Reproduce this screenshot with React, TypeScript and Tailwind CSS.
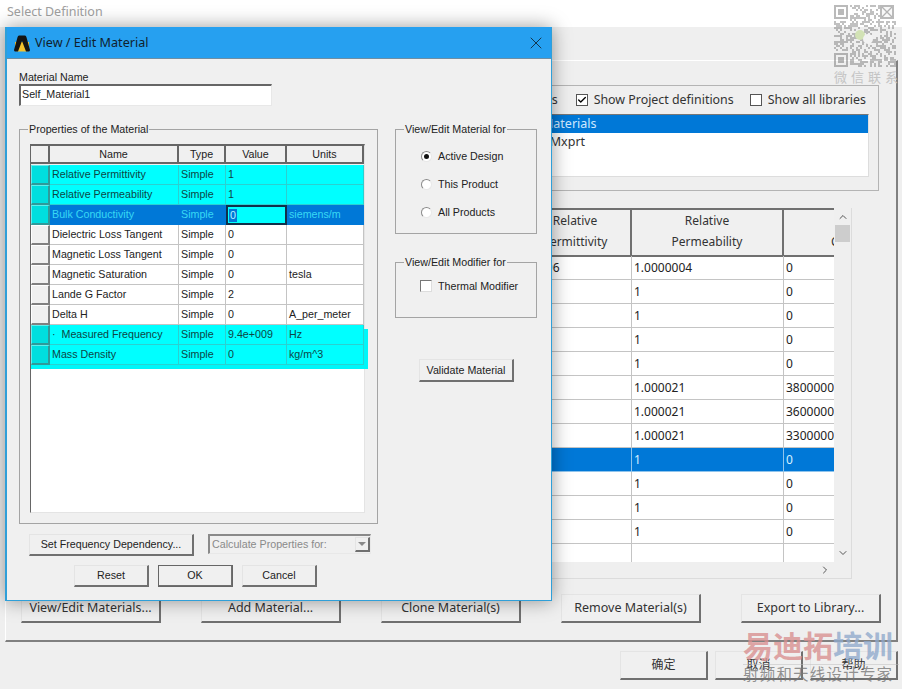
import { ReactNode } from 'react';
import { Check, ChevronDown, ChevronRight, ChevronUp, X } from 'lucide-react';

const backFont = 'font-["Noto_Sans","Noto_Sans_CJK_SC",sans-serif]';
const dialogFont = 'font-["Liberation_Sans","Noto_Sans_CJK_SC",sans-serif]';

const winEdge =
  'border border-t-[#e4e4e4] border-l-[#e4e4e4] border-r-2 border-b-2 border-r-[#707070] border-b-[#707070] bg-[#f0f0f0]';

const materialRows = [
  ['Relative Permittivity', 'Simple', '1', '', 'cyan'],
  ['Relative Permeability', 'Simple', '1', '', 'cyan'],
  ['Bulk Conductivity', 'Simple', '0', 'siemens/m', 'selected'],
  ['Dielectric Loss Tangent', 'Simple', '0', '', ''],
  ['Magnetic Loss Tangent', 'Simple', '0', '', ''],
  ['Magnetic Saturation', 'Simple', '0', 'tesla', ''],
  ['Lande G Factor', 'Simple', '2', '', ''],
  ['Delta H', 'Simple', '0', 'A_per_meter', ''],
];

const backRows = [
  ['0.9996', '1.0000004', '0'],
  ['', '1', '0'],
  ['', '1', '0'],
  ['', '1', '0'],
  ['', '1', '0'],
  ['', '1.000021', '38000000'],
  ['', '1.000021', '36000000'],
  ['', '1.000021', '33000000'],
  ['', '1', '0'],
  ['', '1', '0'],
  ['', '1', '0'],
  ['', '1', '0'],
  ['', '', ''],
];

function WinButton({ children, className }: { children: ReactNode; className: string }) {
  return (
    <button className={`flex shrink-0 items-center justify-center ${winEdge} ${className}`}>
      {children}
    </button>
  );
}

function Group({ title, className, children }: { title: string; className: string; children: ReactNode }) {
  return (
    <fieldset className={`border border-[#a4a4a4] ${className}`}>
      <legend className="ml-[8px] h-[13px] px-[1px] text-[10.7px] leading-[13px] text-[#222]">{title}</legend>
      {children}
    </fieldset>
  );
}

function Radio({ label, on }: { label: string; on?: boolean }) {
  return (
    <div className="flex h-[28px] items-center">
      <span className="flex h-[11px] w-[11px] items-center justify-center rounded-full border border-t-[#8a8a8a] border-l-[#8a8a8a] border-r-[#e8e8e8] border-b-[#e8e8e8] bg-white">
        {on && <span className="h-[5px] w-[5px] rounded-full bg-[#111]" />}
      </span>
      <span className="ml-[6px] text-[10.7px] text-[#222]">{label}</span>
    </div>
  );
}

function StubCell({ tint }: { tint: boolean }) {
  return (
    <div
      className={`h-full border border-r-2 border-b-2 ${
        tint
          ? 'border-t-[#60eeee] border-l-[#60eeee] border-r-[#2f9a9a] border-b-[#2f9a9a] bg-[#00dede]'
          : 'border-t-white border-l-white border-r-[#808080] border-b-[#808080] bg-[#f0f0f0]'
      }`}
    />
  );
}

function MaterialRow({ row }: { row: string[] }) {
  const [name, type, value, units, mode] = row;
  const cyan = mode === 'cyan';
  const selected = mode === 'selected';
  const rowBg = cyan ? 'bg-[#00ffff]' : selected ? 'bg-[#0078d7]' : 'bg-white';
  const line = selected ? 'border-[#0078d7]' : cyan ? 'border-[#2bd0d0]' : 'border-[#c4c4c4]';
  const text = cyan ? 'text-[#0f4545]' : selected ? 'text-[#38d8f4]' : 'text-[#222]';
  const cell = `flex items-center overflow-hidden whitespace-pre border-b border-r pl-[2px] ${line} ${text}`;
  return (
    <div className={`grid h-[20px] grid-cols-[19px_129px_47px_61px_77px] text-[10.7px] ${rowBg}`}>
      <StubCell tint={cyan || selected} />
      <div className={cell}>{name}</div>
      <div className={cell}>{type}</div>
      {selected ? (
        <div className="flex items-center border-2 border-[#10304a] bg-[#00ffff] pl-[1px]">
          <span className="bg-[#0078d7] px-[1px] leading-[13px] text-[#b8f4ff]">{value}</span>
        </div>
      ) : (
        <div className={cell}>{value}</div>
      )}
      <div className={cell}>{units}</div>
    </div>
  );
}

function MaterialGrid() {
  const headers = ['Name', 'Type', 'Value', 'Units'];
  return (
    <div className="ml-[10px] mt-[8px] h-[369px] w-[335px] border border-t-2 border-t-[#666] border-l-[#666] border-r-[#e4e4e4] border-b-[#e4e4e4] bg-white">
      <div className="grid h-[19px] grid-cols-[19px_129px_47px_61px_77px] bg-[#f0f0f0] pb-[1px] text-[10.7px] text-[#222]">
        <div className="border-b-2 border-r-2 border-[#666]" />
        {headers.map(h => (
          <div key={h} className="flex items-center justify-center border-b-2 border-r-2 border-[#666]">
            {h}
          </div>
        ))}
      </div>
      {materialRows.map(row => (
        <MaterialRow key={row[0]} row={row} />
      ))}
      {/* the two added rows carry a cyan mark that runs past the grid */}
      <div className="shadow-[4px_4px_0_0_#00f6f8,0_4px_0_0_#00f6f8]">
        <MaterialRow row={['·  Measured Frequency', 'Simple', '9.4e+009', 'Hz', 'cyan']} />
        <MaterialRow row={['Mass Density', 'Simple', '0', 'kg/m^3', 'cyan']} />
      </div>
    </div>
  );
}

function AppIcon() {
  return (
    <svg width="16" height="17" viewBox="0 0 16 17" className="shrink-0">
      <path d="M1 7 H15 V14 Q15 16.5 12.5 16.5 H3.5 Q1 16.5 1 14 Z" fill="#f2c22e" />
      <path d="M5 .5 H11 Q12 .5 12.4 2 L16 15 Q16 16.5 14.5 16.5 H12 L8 6 L4 16.5 H1.5 Q0 16.5 0 15 L3.6 2 Q4 .5 5 .5 Z" fill="#141414" />
    </svg>
  );
}

function EditDialog() {
  return (
    <div
      className={`absolute left-[5px] top-[27px] flex h-[574px] w-[547px] flex-col border-b border-l-2 border-r border-[#2f9fd8] bg-[#f0f0f0] shadow-[0_0_18px_rgba(0,0,0,0.4)] ${dialogFont}`}
    >
      <div className={`flex h-[32px] shrink-0 items-center border-b border-[#6f8ea3] bg-[#26a0f0] pl-[7px] pr-[5px] pt-[1px] ${backFont}`}>
        <AppIcon />
        <span className="ml-[5px] text-[12.6px] text-[#10202c]">View / Edit Material</span>
        <X size={20} strokeWidth={1} className="ml-auto text-[#10202c]" />
      </div>

      <div className="flex flex-1 flex-col pl-[12px] pt-[11px]">
        <div className="h-[14px] text-[10.7px] leading-[14px] text-[#222]">Material Name</div>
        <div className="h-[22px] w-[253px] border border-t-2 border-l-2 border-t-[#666] border-l-[#666] border-r-[#e8e8e8] border-b-[#e8e8e8] bg-white pl-[1px] text-[10.7px] leading-[16px] text-[#222]">
          Self_Material1
        </div>

        <div className="mt-[17px] flex">
          <Group title="Properties of the Material" className="h-[401px] w-[359px]">
            <MaterialGrid />
          </Group>

          <div className="ml-[17px] flex w-[142px] flex-col">
            <Group title="View/Edit Material for" className="h-[111px]">
              <div className="ml-[25px] mt-[6px]">
                <Radio label="Active Design" on />
                <Radio label="This Product" />
                <Radio label="All Products" />
              </div>
            </Group>
            <Group title="View/Edit Modifier for" className="mt-[22px] h-[62px]">
              <div className="ml-[24px] mt-[9px] flex items-center">
                <span className="h-[12px] w-[12px] border border-t-[#777] border-l-[#777] border-r-[#ddd] border-b-[#ddd] bg-white" />
                <span className="ml-[6px] text-[10.7px] text-[#222]">Thermal Modifier</span>
              </div>
            </Group>
            <WinButton className="ml-[24px] mt-[41px] h-[23px] w-[95px] text-[10.7px] text-[#222]">Validate Material</WinButton>
          </div>
        </div>

        <div className="ml-[10px] mt-[10px] flex items-start">
          <WinButton className="h-[22px] w-[165px] text-[10.7px] text-[#222]">Set Frequency Dependency...</WinButton>
          <div className="ml-[14px] flex h-[20px] w-[163px] items-center border border-t-2 border-l-2 border-t-[#8a8a8a] border-l-[#8a8a8a] border-r-[#e8e8e8] border-b-[#e8e8e8] pl-[2px] text-[10.7px] text-[#8a8a8a]">
            Calculate Properties for:
            <span className={`ml-auto flex h-[15px] w-[15px] items-center justify-center ${winEdge}`}>
              <span className="h-0 w-0 border-x-[4px] border-t-[4px] border-x-transparent border-t-[#8a8a8a]" />
            </span>
          </div>
        </div>

        <div className="ml-[55px] mt-[9px] flex gap-[9px] text-[10.7px] text-[#222]">
          <WinButton className="h-[22px] w-[75px]">Reset</WinButton>
          <WinButton className="h-[22px] w-[75px] outline outline-1 -outline-offset-1 outline-[#666]">OK</WinButton>
          <WinButton className="h-[22px] w-[75px]">Cancel</WinButton>
        </div>
      </div>
    </div>
  );
}

function BackTable() {
  return (
    <div className="ml-[10px] mt-[17px] flex h-[371px] w-[836px] flex-col border-b border-r border-[#dcdcdc]">
      <div className="flex h-[354px]">
        <div className="w-[818px] overflow-hidden bg-white text-[12px] text-[#222]">
          <div className="grid h-[48px] grid-cols-[504px_112px_152px_164px] border-t-2 border-[#707070] bg-[#f0f0f0] leading-[21px] text-[#333]">
            <div className="border-b-2 border-r-2 border-[#707070]" />
            <div className="flex flex-col items-center justify-center border-b-2 border-r-2 border-[#707070] pb-[3px]">
              <span>Relative</span>
              <span>Permittivity</span>
            </div>
            <div className="flex flex-col items-center justify-center border-b-2 border-r-2 border-[#707070] pb-[3px]">
              <span>Relative</span>
              <span>Permeability</span>
            </div>
            <div className="flex flex-col items-center justify-center border-b-2 border-[#707070] pb-[3px]">
              <span>Bulk</span>
              <span>Conductivity</span>
            </div>
          </div>
          {backRows.map((row, i) => {
            const selected = i === 8;
            const cell = `flex items-center border-b border-r pl-[2px] ${
              selected ? 'border-[#8fc4ec] bg-[#0078d7] text-[#d6f2ff]' : 'border-[#c4c4c4]'
            }`;
            return (
              <div key={i} className="grid h-[24px] grid-cols-[504px_112px_152px_164px]">
                <div className={cell} />
                <div className={cell}>{row[0]}</div>
                <div className={cell}>{row[1]}</div>
                <div className={cell}>{row[2]}</div>
              </div>
            );
          })}
        </div>
        <div className="flex w-[17px] flex-col items-center pt-[3px] text-[#555]">
          <ChevronUp size={12} strokeWidth={2} />
          <div className="mt-[2px] h-[17px] w-[15px] bg-[#cdcdcd]" />
          <ChevronDown size={12} strokeWidth={2} className="mb-[3px] mt-auto" />
        </div>
      </div>
      <div className="flex h-[17px] items-center justify-end pr-[20px] text-[#555]">
        <ChevronRight size={12} strokeWidth={2} />
      </div>
    </div>
  );
}

function BackWindow() {
  const labels = ['View/Edit Materials...', 'Add Material...', 'Clone Material(s)', 'Remove Material(s)', 'Export to Library...'];
  return (
    <div className={`flex h-[689px] flex-col bg-[#efefef] text-[12.5px] text-[#333] ${backFont}`}>
      <div className="h-[27px] shrink-0 bg-white pl-[7px] text-[12.5px] leading-[24px] text-[#a0a0a0]">Select Definition</div>
      <div className="ml-[5px] mr-[4px] mt-[33px] h-[582px] shrink-0 border border-b-2 border-r-2 border-t-white border-l-white border-r-[#808080] border-b-[#808080]">
        <div className="ml-[14px] mt-[24px] h-[106px] w-[859px] border border-[#b4b4b4]">
          <div className="flex h-[28px] items-center pl-[10px]">
            <span className="ml-auto">Libraries</span>
            <span className="ml-[18px] flex h-[12px] w-[12px] items-center justify-center border border-[#555] bg-white">
              <Check size={10} strokeWidth={3.2} className="text-black" />
            </span>
            <span className="ml-[6px] text-[12.4px]">Show Project definitions</span>
            <span className="ml-[16px] h-[12px] w-[12px] border border-[#555] bg-white" />
            <span className="ml-[6px] mr-[12px] text-[12.4px]">Show all libraries</span>
          </div>
          <div className="ml-[10px] h-[63px] w-[838px] border border-l-2 border-t-[#777] border-l-[#777] border-r-[#ddd] border-b-[#ddd] bg-white leading-[18px]">
            <div className="bg-[#0078d7] pl-[509px] text-[#cfe9ff]">Materials</div>
            <div className="pl-[509px]">RMxprt</div>
          </div>
        </div>
        <BackTable />
        <div className="ml-[15px] mt-[15px] flex gap-[40px]">
          {labels.map(label => (
            <WinButton key={label} className="h-[29px] w-[140px]">
              {label}
            </WinButton>
          ))}
        </div>
      </div>
      <div className="ml-[620px] mt-[9px] flex gap-[7px]">
        <WinButton className="h-[29px] w-[88px] text-[12px]">确定</WinButton>
        <WinButton className="h-[29px] w-[88px] text-[12px]">取消</WinButton>
        <WinButton className="h-[29px] w-[88px] text-[12px]">帮助</WinButton>
      </div>
    </div>
  );
}

// scattered QR blocks; a fixed seed keeps the picture the same on every load
function QrWatermark() {
  const cells: [number, number][] = [];
  let seed = 77;
  for (let y = 0; y < 31; y++) {
    for (let x = 0; x < 31; x++) {
      seed = (seed * 1103515245 + 12345) & 0x7fffffff;
      const inFinder = (x < 8 && y < 8) || (x > 22 && y < 8) || (x < 8 && y > 22);
      if (!inFinder && (seed >> 16) % 2 === 0) cells.push([x, y]);
    }
  }
  const finders = [
    [0, 0],
    [0, 24],
  ];
  return (
    <div className={`absolute left-[834px] top-[5px] w-[68px] overflow-hidden ${backFont}`}>
      <svg width="62" height="62" viewBox="0 0 31 31" className="opacity-40 blur-[0.5px]">
        {cells.map(([x, y]) => (
          <rect key={`${x}-${y}`} x={x} y={y} width="1" height="1" fill="#666" />
        ))}
        {finders.map(([x, y]) => (
          <g key={y}>
            <rect x={x + 0.5} y={y + 0.5} width="6" height="6" fill="none" stroke="#555" />
            <rect x={x + 2} y={y + 2} width="3" height="3" fill="#555" />
          </g>
        ))}
        <rect x="23.5" y="0.5" width="6" height="6" fill="#eee" stroke="#555" />
        <path d="M24 1 L29 6 M29 1 L24 6" stroke="#444" strokeWidth="0.7" />
        <circle cx="13" cy="15" r="2.5" fill="#a8d060" />
        <circle cx="17" cy="17" r="2.5" fill="#f8f8f8" />
      </svg>
      <div className="mt-[2px] whitespace-nowrap text-[13px] leading-[16px] tracking-[4px] text-[#c4c4c4]">微信联系</div>
    </div>
  );
}

function BrandWatermark() {
  return (
    <div className={`absolute left-[743px] top-[628px] w-[156px] ${backFont}`}>
      <div className="flex whitespace-nowrap text-[30px] font-bold leading-[36px]">
        <span className="text-[#d98f8f]/80">易迪拓</span>
        <span className="text-[#8fa9cc]/80">培训</span>
      </div>
      <div className="whitespace-nowrap border-t border-[#bbb]/50 text-[15.5px] leading-[18px] tracking-[1.2px] text-[#777]/80">
        射频和天线设计专家
      </div>
    </div>
  );
}

export default function App() {
  return (
    <div className="relative h-[689px] w-[902px] overflow-hidden bg-[#efefef]">
      <BackWindow />
      <QrWatermark />
      <BrandWatermark />
      <EditDialog />
    </div>
  );
}
